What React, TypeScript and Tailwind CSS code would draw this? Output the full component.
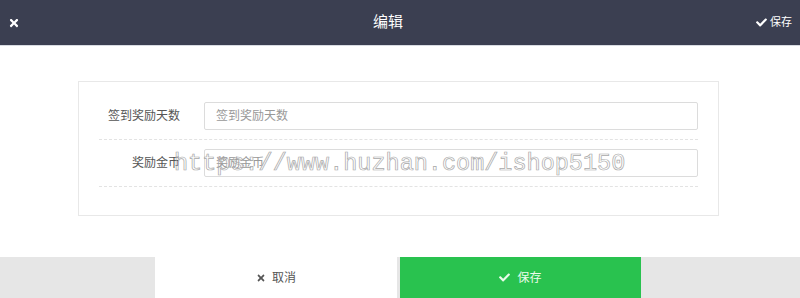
import { FaTimes, FaCheck } from 'react-icons/fa';

const FormRow = ({ label, placeholder }: { label: string; placeholder: string }) => {
  return (
    <div className="flex items-center border-b border-dashed border-[#e3e3e3] pb-[9px] mb-[9px]">
      <label className="w-[81px] text-right text-[12px] text-[#555]">{label}</label>
      <input
        className="ml-[24px] h-[28px] flex-1 rounded-[2px] border border-[#dcdcdc] px-[11px] text-[12px] text-[#555] placeholder:text-[#999] outline-none"
        placeholder={placeholder}
      />
    </div>
  );
};

export default function App() {
  return (
    <div className="relative flex h-[298px] w-[800px] flex-col overflow-hidden bg-white font-['Liberation_Sans','Noto_Sans_CJK_SC',sans-serif]">
      {/* Header */}
      <div className="flex h-[45px] items-center justify-between bg-[#3b3f51] px-[8px] text-white">
        <FaTimes className="text-[12px]" />
        <span className="text-[15px]">编辑</span>
        <span className="flex items-center gap-[3px] text-[11px]">
          <FaCheck className="text-[11px]" />
          保存
        </span>
      </div>
      <div className="h-px bg-[#d8dbe2]" />

      {/* Body */}
      <div className="flex-1 px-[78px] pt-[35px]">
        <div className="w-[641px] border border-[#e8e8e8] px-[20px] pt-[20px] pb-[19px]">
          <FormRow label="签到奖励天数" placeholder="签到奖励天数" />
          <FormRow label="奖励金币" placeholder="奖励金币" />
        </div>
      </div>

      {/* Footer */}
      <div className="flex h-[41px] bg-[#e6e6e6] pl-[155px]">
        <button className="flex w-[242px] items-center justify-center gap-[6px] bg-white text-[12px] text-[#555]">
          <FaTimes className="text-[10px]" />
          取消
        </button>
        <button className="ml-[3px] flex w-[241px] items-center justify-center gap-[7px] bg-[#29c24f] text-[12px] text-[#eafbea]">
          <FaCheck className="text-[11px]" />
          保存
        </button>
      </div>

      {/* Watermark */}
      <div className="pointer-events-none absolute left-[174px] top-[146px] font-['Liberation_Mono',monospace] text-[23.5px] text-transparent [-webkit-text-stroke:0.7px_#a8a8a8]">
        https://www.huzhan.com/ishop5150
      </div>
    </div>
  );
}
